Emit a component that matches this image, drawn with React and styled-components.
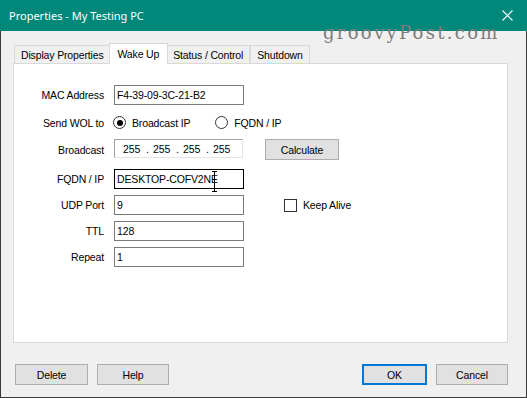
import React from "react";
import styled, { createGlobalStyle } from "styled-components";

const GlobalStyle = createGlobalStyle`
  html, body {
    margin: 0;
    padding: 0;
    background: #f0f0f0;
  }
  body {
    font-family: "Liberation Sans", Arial, sans-serif;
  }
`;

const Window = styled.div`
  width: 527px;
  height: 398px;
  display: flex;
  flex-direction: column;
  overflow: hidden;
`;

const TitleBar = styled.div`
  flex: none;
  height: 31px;
  box-sizing: border-box;
  padding: 0 14px 0 9px;
  background: #00897b;
  color: #fff;
  display: flex;
  align-items: center;
  justify-content: space-between;
  font-family: "Noto Sans", "Liberation Sans", sans-serif;
  font-size: 11px;
`;

const Body = styled.div`
  position: relative;
  flex: 1;
  box-sizing: border-box;
  padding: 12px 18px 0 12px;
  background: #f0f0f0;
  border: 1px solid #3a3a3a;
  border-top: none;
  display: flex;
  flex-direction: column;
  font-size: 10.5px;
  letter-spacing: -0.15px;
  color: #000;
`;

const Watermark = styled.div`
  position: absolute;
  left: 322px;
  top: -7px;
  font-family: "DejaVu Serif", "Liberation Serif", serif;
  font-size: 18px;
  line-height: 18px;
  letter-spacing: 2.3px;
  color: #7c7c7c;
  pointer-events: none;
  z-index: 5;
`;

const TabStrip = styled.div`
  height: 20px;
  padding-left: 1px;
  display: flex;
  align-items: flex-end;
  position: relative;
  z-index: 2;
`;

const Tab = styled.div`
  box-sizing: border-box;
  height: ${(p) => (p.$active ? "21px" : "18px")};
  margin: ${(p) => (p.$active ? "0 -2px -1px -2px" : "0")};
  padding: ${(p) => (p.$active ? "0 8px 1px" : "0 6px")};
  border: 1px solid #d9d9d9;
  border-bottom: none;
  background: ${(p) => (p.$active ? "#fff" : "#f0f0f0")};
  position: relative;
  z-index: ${(p) => (p.$active ? 2 : 1)};
  display: flex;
  align-items: center;
  white-space: nowrap;
`;

const Panel = styled.div`
  flex: none;
  height: 280px;
  box-sizing: border-box;
  padding-top: 21px;
  background: #fff;
  border: 1px solid #d9d9d9;
  display: flex;
  flex-direction: column;
`;

const Row = styled.div`
  display: flex;
  align-items: center;
  height: ${(p) => p.$h || 20}px;
  margin-top: ${(p) => p.$top || 0}px;
`;

const Label = styled.div`
  flex: none;
  width: 90px;
  margin-right: 10px;
  text-align: right;
  white-space: nowrap;
`;

const Field = styled.div`
  position: relative;
  flex: none;
  box-sizing: border-box;
  width: ${(p) => p.$w || 130}px;
  height: 20px;
  padding-left: 2px;
  border: 1px solid ${(p) => (p.$focused ? "#000" : "#7a7a7a")};
  background: #fff;
  line-height: 18px;
  white-space: nowrap;
`;

const IpBox = styled.div`
  flex: none;
  align-self: flex-start;
  box-sizing: border-box;
  width: 129px;
  height: 19px;
  padding-left: 8px;
  border: 1px solid;
  border-color: #a0a0a0 #e3e3e3 #e3e3e3 #a0a0a0;
  display: flex;
  align-items: center;
`;

const Octet = styled.span`
  width: 21px;
`;

const Dot = styled.span`
  width: 9px;
  padding-left: 2px;
  box-sizing: border-box;
`;

const RadioGroup = styled.div`
  display: flex;
  align-items: center;
  gap: 25px;
  margin-left: -1px;
`;

const Option = styled.div`
  display: flex;
  align-items: center;
  gap: 6px;
  white-space: nowrap;
`;

const Radio = styled.span`
  position: relative;
  box-sizing: border-box;
  width: 13px;
  height: 13px;
  border: 1px solid #333;
  border-radius: 50%;
  background: #fff;

  &::after {
    content: "";
    display: ${(p) => (p.$checked ? "block" : "none")};
    position: absolute;
    left: 2.5px;
    top: 2.5px;
    width: 6px;
    height: 6px;
    border-radius: 50%;
    background: #000;
  }
`;

const Check = styled.span`
  box-sizing: border-box;
  width: 13px;
  height: 13px;
  border: 1px solid #333;
  background: #fff;
`;

const CheckOption = styled(Option)`
  margin-left: 40px;
`;

const Button = styled.div`
  box-sizing: border-box;
  flex: none;
  width: ${(p) => p.$w || 72}px;
  height: 21px;
  margin-left: ${(p) => p.$ml || 0}px;
  background: #e1e1e1;
  border: ${(p) => (p.$default ? "2px solid #0078d7" : "1px solid #adadad")};
  display: flex;
  align-items: center;
  justify-content: center;
  white-space: nowrap;
`;

const Footer = styled.div`
  display: flex;
  justify-content: space-between;
  margin-top: 21px;
  padding-left: 2px;
`;

const ButtonGroup = styled.div`
  display: flex;
  gap: 9px;
`;

const Cursor = styled.svg`
  position: absolute;
  left: 96px;
  top: 1px;
`;

function CloseIcon() {
  return (
    <svg width="11" height="11" viewBox="0 0 11 11">
      <path d="M0.5 0.5 L10.5 10.5 M10.5 0.5 L0.5 10.5" stroke="#fff" strokeWidth="1.1" fill="none" />
    </svg>
  );
}

function IBeam() {
  return (
    <Cursor width="7" height="21" viewBox="0 0 7 21">
      <path d="M1 0.5 H6 M3.5 0.5 V20.5 M1 20.5 H6" stroke="#000" strokeWidth="1" fill="none" />
    </Cursor>
  );
}

const tabs = ["Display Properties", "Wake Up", "Status / Control", "Shutdown"];

export default function App() {
  return (
    <Window>
      <GlobalStyle />
      <TitleBar>
        <span>Properties - My Testing PC</span>
        <CloseIcon />
      </TitleBar>
      <Body>
        <Watermark>groovyPost.com</Watermark>
        <TabStrip>
          {tabs.map((t) => (
            <Tab key={t} $active={t === "Wake Up"}>
              {t}
            </Tab>
          ))}
        </TabStrip>
        <Panel>
          <Row>
            <Label>MAC Address</Label>
            <Field>F4-39-09-3C-21-B2</Field>
          </Row>
          <Row $top={7} $h={21}>
            <Label>Send WOL to</Label>
            <RadioGroup>
              <Option>
                <Radio $checked />
                Broadcast IP
              </Option>
              <Option>
                <Radio />
                FQDN / IP
              </Option>
            </RadioGroup>
          </Row>
          <Row $top={6} $h={21}>
            <Label>Broadcast</Label>
            <IpBox>
              <Octet>255</Octet>
              <Dot>.</Dot>
              <Octet>255</Octet>
              <Dot>.</Dot>
              <Octet>255</Octet>
              <Dot>.</Dot>
              <Octet>255</Octet>
            </IpBox>
            <Button $w={74} $ml={22}>Calculate</Button>
          </Row>
          <Row $top={9}>
            <Label>FQDN / IP</Label>
            <Field $focused>
              DESKTOP-COFV2NE
              <IBeam />
            </Field>
          </Row>
          <Row $top={6}>
            <Label>UDP Port</Label>
            <Field>9</Field>
            <CheckOption>
              <Check />
              Keep Alive
            </CheckOption>
          </Row>
          <Row $top={6}>
            <Label>TTL</Label>
            <Field>128</Field>
          </Row>
          <Row $top={6}>
            <Label>Repeat</Label>
            <Field>1</Field>
          </Row>
        </Panel>
        <Footer>
          <ButtonGroup>
            <Button $w={73}>Delete</Button>
            <Button>Help</Button>
          </ButtonGroup>
          <ButtonGroup>
            <Button $w={65} $default>OK</Button>
            <Button>Cancel</Button>
          </ButtonGroup>
        </Footer>
      </Body>
    </Window>
  );
}
